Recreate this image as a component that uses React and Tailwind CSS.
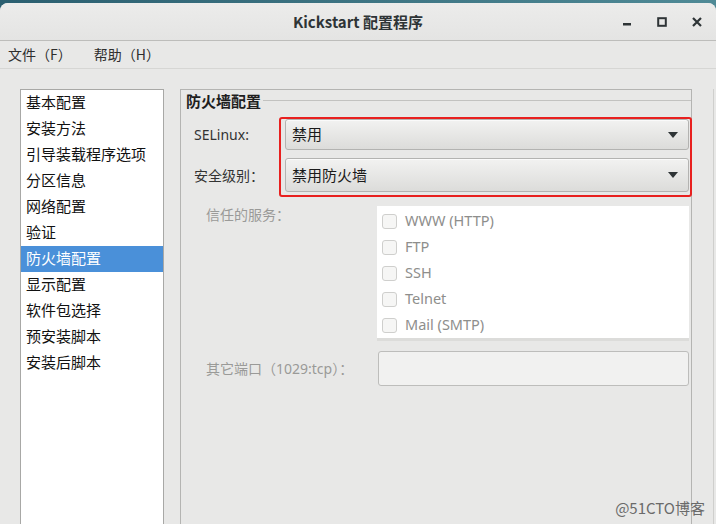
import React from 'react';

const CJK = '"Noto Sans CJK SC", "Noto Sans", sans-serif';
const UI = '"Noto Sans", "Noto Sans CJK SC", sans-serif';

const SECTIONS = [
  '基本配置', '安装方法', '引导装载程序选项', '分区信息', '网络配置', '验证',
  '防火墙配置', '显示配置', '软件包选择', '预安装脚本', '安装后脚本',
];

const SERVICES = ['WWW (HTTP)', 'FTP', 'SSH', 'Telnet', 'Mail (SMTP)'];

export default function App() {
  return (
    <div className="w-[716px] h-[524px] overflow-hidden bg-gradient-to-r from-[#2b5f70] to-[#4f8a96] pt-[3px] relative" style={{ fontFamily: CJK }}>
      <div className="h-[521px] rounded-t-[8px] bg-[#e8e8e7] flex flex-col overflow-hidden">
        {/* Title bar */}
        <div className="h-[38px] shrink-0 relative flex items-center justify-center border-b border-[#bdbdbb] bg-gradient-to-b from-[#ececeb] to-[#e4e4e3]">
          <span className="text-[15px] font-bold text-[#2e3436] leading-none">Kickstart 配置程序</span>
          <div className="absolute right-0 top-0 h-full flex items-center">
            <svg width="10" height="10" viewBox="0 0 10 10" className="mr-[25px]">
              <rect x="1" y="6" width="8" height="2.5" fill="#2e3436" />
            </svg>
            <svg width="10" height="10" viewBox="0 0 10 10" className="mr-[25px]">
              <rect x="1.2" y="1.2" width="7.6" height="7.6" fill="none" stroke="#2e3436" strokeWidth="2" />
            </svg>
            <svg width="10" height="10" viewBox="0 0 10 10" className="mr-[14px]">
              <path d="M1 1 L9 9 M9 1 L1 9" stroke="#2e3436" strokeWidth="2.2" />
            </svg>
          </div>
        </div>

        {/* Menu bar */}
        <div className="h-[28px] shrink-0 flex items-center gap-[22px] pl-[8px] border-b border-[#d6d6d4] text-[14px] text-[#2e2e2e]">
          <span>文件（F）</span>
          <span>帮助（H）</span>
        </div>

        {/* Body */}
        <div className="flex-1 flex pt-[20px] pl-[20px] min-h-0">
          {/* Section list */}
          <div className="w-[144px] shrink-0 bg-white border border-b-0 border-[#a8a8a6]">
            {SECTIONS.map((s) => {
              const sel = s === '防火墙配置';
              return (
                <div
                  key={s}
                  className={`h-[26px] flex items-center pl-[5px] pb-[2px] text-[15px] ${sel ? 'bg-[#4a90d9] text-white' : 'text-[#111]'}`}
                >
                  {s}
                </div>
              );
            })}
          </div>

          {/* Firewall panel */}
          <div className="w-[512px] shrink-0 ml-[16px] border border-b-0 border-[#b4b4b2] relative">
            <div className="h-[20px] flex items-center pl-[5px]">
              <span className="text-[15px] font-bold text-[#1e1e1e] leading-none">防火墙配置</span>
              <div className="flex-1 h-px bg-[#c2c2c0] ml-[2px] mt-[1px]" />
            </div>

            <div className="mt-[9px] flex items-center h-[31px] pl-[13px]">
              <span className="w-[90px] shrink-0 text-[14px] text-[#333]" style={{ fontFamily: UI }}>SELinux:</span>
              <Combo value="禁用" />
            </div>
            <div className="mt-[8px] flex items-center h-[34px] pl-[13px]">
              <span className="w-[90px] shrink-0 text-[14px] text-[#333]">安全级别：</span>
              <Combo value="禁用防火墙" />
            </div>

            {/* annotation */}
            <div className="absolute left-[98px] top-[27px] w-[413px] h-[80px] border-2 border-[#e8201f] rounded-[3px]" />

            <div className="mt-[14px] flex pl-[25px]">
              <span className="w-[171px] shrink-0 text-[14px] text-[#9a9a98] -mt-[2px]">信任的服务：</span>
              <div className="w-[312px] bg-white border-b-[3px] border-[#dcdcda] pt-[2px]">
                {SERVICES.map((s) => (
                  <div key={s} className="h-[26px] flex items-center pl-[5px]">
                    <span className="w-[15px] h-[15px] rounded-[3px] border border-[#cfcfcd] bg-[#f6f6f5]" />
                    <span className="ml-[8px] text-[14.5px] text-[#8e8e8c]" style={{ fontFamily: UI }}>{s}</span>
                  </div>
                ))}
              </div>
            </div>

            <div className="mt-[10px] flex items-center pl-[25px]">
              <span className="w-[172px] shrink-0 text-[14px] text-[#9a9a98]">
                其它端口（<span style={{ fontFamily: UI }}>1029:tcp</span>）：
              </span>
              <div className="w-[311px] h-[35px] rounded-[3px] border border-[#bdbdbb] bg-[#f1f1f0]" />
            </div>
          </div>

          <div className="w-px self-stretch bg-[#cfcfcd] ml-[21px]" />
        </div>
      </div>

      <span className="absolute right-[11px] bottom-[5px] text-[15px] text-[#6a6a6a]">@51CTO博客</span>
    </div>
  );
}

function Combo({ value }) {
  return (
    <div className="ml-[1px] w-[404px] h-full flex items-center justify-between rounded-[3px] border border-[#b3b3b1] bg-gradient-to-b from-[#f2f2f1] to-[#dcdcda] pl-[6px] pr-[10px] shadow-[0_1px_0_#fafafa_inset]">
      <span className="text-[15px] text-[#1a1a1a]">{value}</span>
      <svg width="10" height="6" viewBox="0 0 10 6">
        <path d="M0 0 L10 0 L5 6 Z" fill="#2e3436" />
      </svg>
    </div>
  );
}
